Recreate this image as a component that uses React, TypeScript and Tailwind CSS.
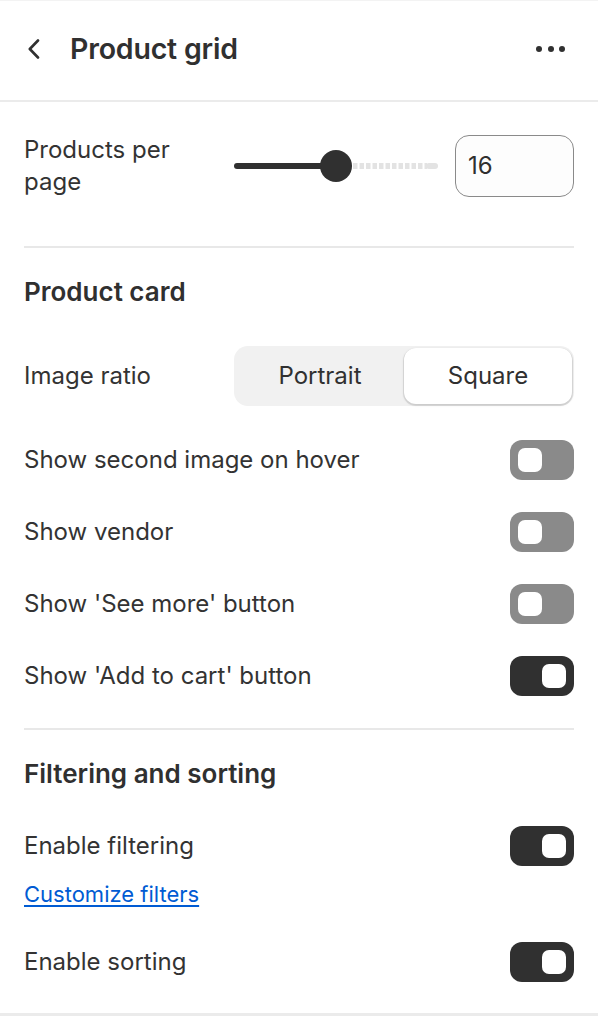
import React from "react";

function Toggle({ on }: { on: boolean }) {
  return (
    <div
      className={
        on
          ? "flex h-10 w-16 shrink-0 items-center justify-end rounded-[12px] bg-[#303030] px-2"
          : "flex h-10 w-16 shrink-0 items-center justify-start rounded-[12px] bg-[#8a8a8a] px-2"
      }
    >
      <div className="h-6 w-6 rounded-[7px] bg-white" />
    </div>
  );
}

function ToggleRow({ label, on }: { label: string; on: boolean }) {
  return (
    <div className="flex items-center justify-between">
      <span className="text-[24px] leading-8 text-[#333333]">{label}</span>
      <Toggle on={on} />
    </div>
  );
}

function Slider() {
  return (
    <svg width="204" height="34" viewBox="0 0 204 34" className="shrink-0">
      <line x1="3" y1="17" x2="102" y2="17" stroke="#303030" strokeWidth="6" strokeLinecap="round" />
      <line x1="119" y1="17" x2="193" y2="17" stroke="#e3e3e3" strokeWidth="6" strokeDasharray="4.5 2" />
      <rect x="192" y="14" width="12" height="6" rx="3" fill="#e3e3e3" />
      <circle cx="102" cy="17" r="16" fill="#303030" />
    </svg>
  );
}

export default function App() {
  return (
    <div
      className="min-h-[1016px] w-full bg-white text-[#303030]"
      style={{ fontFamily: "Inter, 'Noto Sans', sans-serif" }}
    >
      <div className="h-px bg-[#f3f3f3]" />
      <header className="flex h-[101px] items-center justify-between border-b-2 border-[#ebebeb] pl-[28px] pr-[33px] pb-[3px]">
        <div className="flex items-center gap-[30px]">
          <svg width="12" height="20" viewBox="0 0 12 20" fill="none">
            <path d="M10 1.5 1.8 10 10 18.5" stroke="#303030" strokeWidth="2.6" strokeLinecap="round" strokeLinejoin="round" />
          </svg>
          <h1 className="text-[28.5px] font-semibold leading-8 tracking-[-0.2px]">Product grid</h1>
        </div>
        <div className="flex items-center gap-[5.5px]">
          <div className="h-[6px] w-[6px] rounded-full bg-[#303030]" />
          <div className="h-[6px] w-[6px] rounded-full bg-[#303030]" />
          <div className="h-[6px] w-[6px] rounded-full bg-[#303030]" />
        </div>
      </header>

      <div className="px-6">
        <section className="pt-[32px] pb-[48px]">
          <div className="flex items-center">
            <div className="w-[210px] text-[24px] leading-8 text-[#333333]">
              Products per
              <br />
              page
            </div>
            <Slider />
            <div className="ml-[17px] flex h-[62px] flex-1 items-center rounded-[14px] border border-[#8a8a8a] bg-[#fdfdfd] px-3 text-[24px]">
              16
            </div>
          </div>
        </section>

        <div className="h-[2px] bg-[#e8e8e8]" />

        <section className="pt-[30px] pb-[32px]">
          <h2 className="text-[26px] font-semibold leading-7">Product card</h2>
          <div className="mt-[40px] flex items-center">
            <div className="w-[210px] text-[24px] leading-8 text-[#333333]">Image ratio</div>
            <div className="flex h-[60px] flex-1 rounded-[14px] bg-[#f1f1f1] p-[2px]">
              <div className="flex flex-1 items-center justify-center text-[24px]">Portrait</div>
              <div className="flex flex-1 items-center justify-center rounded-[12px] bg-white text-[24px] shadow-[0_1px_0_1px_rgba(0,0,0,0.08),0_1px_3px_rgba(0,0,0,0.12)]">
                Square
              </div>
            </div>
          </div>
          <div className="mt-[34px] flex flex-col gap-8">
            <ToggleRow label="Show second image on hover" on={false} />
            <ToggleRow label="Show vendor" on={false} />
            <ToggleRow label="Show 'See more' button" on={false} />
            <ToggleRow label="Show 'Add to cart' button" on={true} />
          </div>
        </section>

        <div className="h-[2px] bg-[#e8e8e8]" />

        <section className="pt-[30px] pb-[31px]">
          <h2 className="text-[26px] font-semibold leading-7">Filtering and sorting</h2>
          <div className="mt-[38px]">
            <ToggleRow label="Enable filtering" on={true} />
          </div>
          <div className="mt-[14px]">
            <a className="text-[22px] leading-7 text-[#005bd3] underline underline-offset-[3px]" href="#">
              Customize filters
            </a>
          </div>
          <div className="mt-[34px]">
            <ToggleRow label="Enable sorting" on={true} />
          </div>
        </section>
      </div>
      <div className="h-[3px] bg-[#ebebeb]" />
    </div>
  );
}
